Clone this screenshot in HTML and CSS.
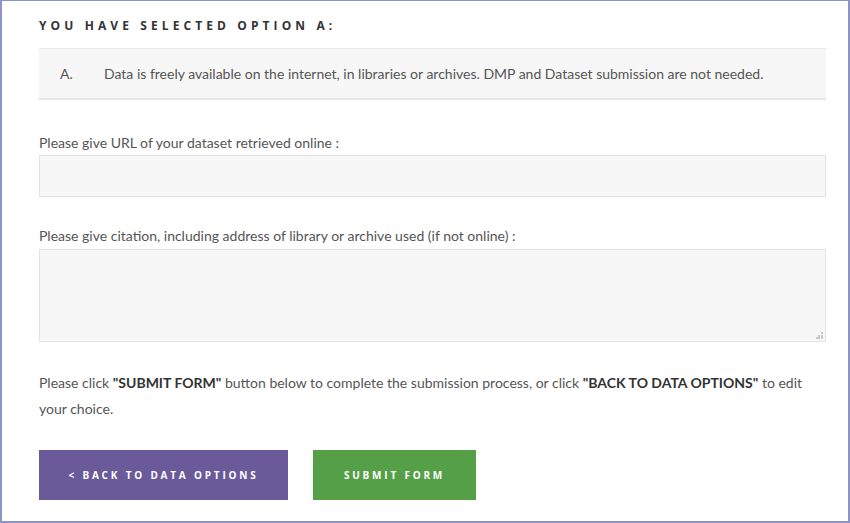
FILE: index.html
```html
<!DOCTYPE html>
<html>
<head>
<meta charset="utf-8">
<link rel="stylesheet" href="styles.css">
</head>
<body>
<div class="frame">
  <h2 class="title">YOU HAVE SELECTED OPTION A:</h2>
  <div class="option">
    <span class="letter">A.</span>
    <span class="desc">Data is freely available on the internet, in libraries or archives. DMP and Dataset submission are not needed.</span>
  </div>
  <label class="label">Please give URL of your dataset retrieved online :</label>
  <div class="input"></div>
  <label class="label second">Please give citation, including address of library or archive used (if not online) :</label>
  <div class="textarea">
    <svg class="grip" width="7" height="7" viewBox="0 0 7 7"><g fill="#c8c8c8"><rect x="5" y="0" width="2" height="2"/><rect x="2" y="3" width="2" height="2"/><rect x="5" y="3" width="2" height="2"/><rect x="0" y="5" width="2" height="2"/><rect x="2" y="5" width="2" height="2"/><rect x="5" y="5" width="2" height="2"/></g></svg>
  </div>
  <p class="note">Please click <b>"SUBMIT FORM"</b> button below to complete the submission process, or click <b>"BACK TO DATA OPTIONS"</b> to edit your choice.</p>
  <div class="buttons">
    <button class="btn back">&lt; BACK TO DATA OPTIONS</button>
    <button class="btn submit">SUBMIT FORM</button>
  </div>
</div>
</body>
</html>
```
FILE: styles.css
```css
* { box-sizing: border-box; }
html, body { margin: 0; padding: 0; }
body { width: 850px; height: 523px; background: #fff; font-family: "Lato", "Open Sans", sans-serif; color: #5a5a5a; }
.frame { width: 850px; height: 523px; border: 2px solid #8b93c8; border-top-width: 1px; padding: 0 22px 0 37px; overflow: hidden; }
.title { margin: 17px 0 0 0; font-family: "Open Sans", sans-serif; font-weight: 700; font-size: 12px; letter-spacing: 4.1px; color: #333; line-height: 16px; }
.option { margin-top: 14px; background: #f7f7f7; border-top: 1px solid #e8e8e8; border-bottom: 2px solid #e6e6e6; height: 52px; display: flex; align-items: center; padding-left: 21px; font-size: 14px; color: #555; }
.letter { width: 44px; }
.label { display: block; margin-top: 34px; font-size: 14px; line-height: 18px; color: #555; }
.label.second { margin-top: 30px; }
.input { margin-top: 3px; height: 42px; background: #f7f7f7; border: 1px solid #e2e2e2; }
.textarea { margin-top: 4px; height: 93px; background: #f7f7f7; border: 1px solid #e2e2e2; position: relative; }
.grip { position: absolute; right: 2px; bottom: 2px; }
.note { margin: 28px 0 0 0; font-size: 14px; line-height: 26px; color: #555; }
.note b { color: #333; font-weight: 700; }
.buttons { margin-top: 28px; display: flex; gap: 25px; }
.btn { height: 50px; border: none; color: #fff; font-family: "Open Sans", sans-serif; font-weight: 700; font-size: 10px; letter-spacing: 2.8px; padding: 0; }
.back { width: 249px; background: #6a5a9a; }
.submit { width: 163px; background: #55a047; }
```
